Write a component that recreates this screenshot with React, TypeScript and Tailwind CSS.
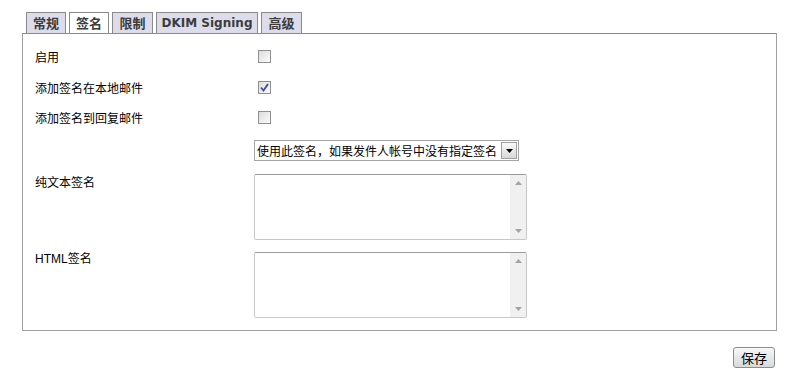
import React from "react";

const cjk = { fontFamily: '"Noto Sans CJK SC", "Liberation Sans", sans-serif' };

function Tab({ label, active, w, small }: { label: string; active?: boolean; w: string; small?: boolean }) {
  return (
    <div
      className={`${w} h-[21px] flex items-center justify-center border border-b-0 border-[#8a8a8a] ${small ? "text-[12px]" : "text-[13px]"} font-bold text-[#3c3c3c] leading-none ${active ? "bg-white" : "bg-[#dcdcea]"}`}
      style={{ fontFamily: '"DejaVu Sans", "Noto Sans CJK SC", sans-serif' }}
    >
      {label}
    </div>
  );
}

function Checkbox({ checked }: { checked?: boolean }) {
  return (
    <div className="w-[13px] h-[13px] border border-[#8f8f8f] bg-gradient-to-br from-[#dcdcdc] to-[#fbfbfb] flex items-center justify-center">
      {checked && (
        <svg width="9" height="9" viewBox="0 0 9 9">
          <path d="M1 4.5 L3.5 7.5 L8 1" fill="none" stroke="#3b4d9b" strokeWidth="1.8" />
        </svg>
      )}
    </div>
  );
}

function TextArea() {
  return (
    <div className="w-[273px] h-[66px] border border-[#c8c8c8] border-t-[#9a9a9a] rounded-[2px] bg-white flex justify-end">
      <div className="w-[16px] h-full bg-[#f0f0f0] flex flex-col items-center justify-between py-[6px]">
        <svg width="7" height="4" viewBox="0 0 7 4"><path d="M0 4 L3.5 0 L7 4 Z" fill="#a3a3a3" /></svg>
        <svg width="7" height="4" viewBox="0 0 7 4"><path d="M0 0 L3.5 4 L7 0 Z" fill="#a3a3a3" /></svg>
      </div>
    </div>
  );
}

export default function App() {
  return (
    <div className="w-[800px] h-[377px] bg-white text-[12px] text-black pt-[12px]" style={cjk}>
      <div className="flex gap-[3px] ml-[26px] items-end">
        <Tab label="常规" w="w-[40px]" />
        <Tab label="签名" w="w-[40px]" active />
        <Tab label="限制" w="w-[41px]" />
        <Tab label="DKIM Signing" w="w-[102px]" small />
        <Tab label="高级" w="w-[41px]" />
      </div>
      <div className="ml-[22px] w-[755px] h-[298px] border border-[#a0a0a0] border-t-[#8a8a8a] pl-[12px] pt-[15px]">
        <div className="grid grid-cols-[219px_1fr] items-center">
          <div className="h-[15px] flex items-center">启用</div>
          <div className="h-[15px] pl-[4px] flex items-center"><Checkbox /></div>
        </div>
        <div className="grid grid-cols-[219px_1fr] items-center mt-[16px]">
          <div className="h-[15px] flex items-center">添加签名在本地邮件</div>
          <div className="h-[15px] pl-[4px] flex items-center"><Checkbox checked /></div>
        </div>
        <div className="grid grid-cols-[219px_1fr] items-center mt-[15px]">
          <div className="h-[15px] flex items-center">添加签名到回复邮件</div>
          <div className="h-[15px] pl-[4px] flex items-center"><Checkbox /></div>
        </div>
        <div className="grid grid-cols-[219px_1fr] items-center mt-[15px]">
          <div />
          <div className="w-[265px] h-[21px] border border-[#a5a5a5] flex items-center bg-white">
            <div className="flex-1 pl-[2px] text-[12px] whitespace-nowrap leading-none">使用此签名，如果发件人帐号中没有指定签名</div>
            <div className="w-[16px] h-[17px] mr-[1px] border border-[#a0a0a0] bg-gradient-to-b from-[#fafafa] to-[#d8d8d8] flex items-center justify-center shrink-0">
              <svg width="7" height="4" viewBox="0 0 7 4"><path d="M0 0 L3.5 4 L7 0 Z" fill="#000" /></svg>
            </div>
          </div>
        </div>
        <div className="grid grid-cols-[219px_1fr] items-start mt-[13px]">
          <div className="leading-[15px]">纯文本签名</div>
          <TextArea />
        </div>
        <div className="grid grid-cols-[219px_1fr] items-start mt-[12px]">
          <div className="leading-[15px]" style={{ fontFamily: '"Liberation Sans", "Noto Sans CJK SC", sans-serif' }}>HTML签名</div>
          <TextArea />
        </div>
      </div>
      <div className="flex justify-end w-[775px] mt-[16px]">
        <button className="w-[42px] h-[21px] border border-[#8c8c8c] rounded-[3px] bg-gradient-to-b from-[#f8f8f8] to-[#d9d9d9] text-[13px] leading-none flex items-center justify-center" style={cjk}>
          保存
        </button>
      </div>
    </div>
  );
}
